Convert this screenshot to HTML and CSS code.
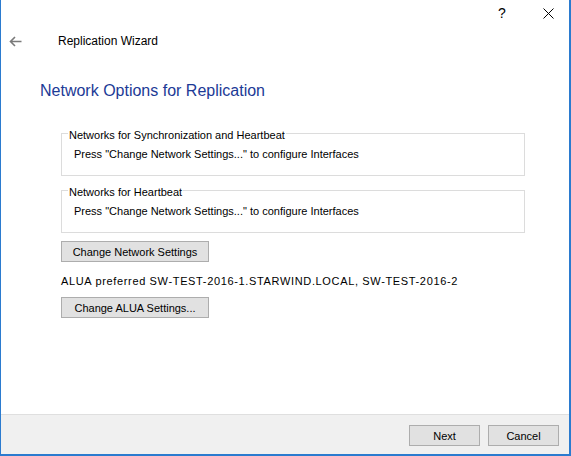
FILE: index.html
```html
<!DOCTYPE html>
<html lang="en">
<head>
<meta charset="utf-8">
<title>Replication Wizard</title>
<link rel="stylesheet" href="styles.css">
</head>
<body>
<div class="window">
  <div class="titlebar">
    <span class="tb-help">?</span>
    <span class="tb-close">
      <svg width="11" height="11" viewBox="0 0 11 11"><path d="M0.5 0.5 L10.5 10.5 M10.5 0.5 L0.5 10.5" stroke="#000" stroke-width="1" fill="none"/></svg>
    </span>
  </div>

  <div class="header">
    <span class="back">
      <svg width="13" height="11" viewBox="0 0 13 11"><path d="M12.5 5.5 H1.5 M6 1 L1.5 5.5 L6 10" stroke="#7a7a7a" stroke-width="1.6" fill="none"/></svg>
    </span>
    <span class="wizard-title">Replication Wizard</span>
  </div>

  <main class="main">
    <h1 class="instruction">Network Options for Replication</h1>

    <div class="panel">
      <fieldset class="group">
        <legend>Networks for Synchronization and Heartbeat</legend>
        <div class="group-text">Press "Change Network Settings..." to configure Interfaces</div>
      </fieldset>

      <fieldset class="group group-second">
        <legend>Networks for Heartbeat</legend>
        <div class="group-text">Press "Change Network Settings..." to configure Interfaces</div>
      </fieldset>

      <button class="btn btn-wide btn-network">Change Network Settings</button>

      <div class="alua">ALUA preferred SW-TEST-2016-1.STARWIND.LOCAL, SW-TEST-2016-2</div>

      <button class="btn btn-wide btn-alua">Change ALUA Settings...</button>
    </div>
  </main>

  <footer class="footer">
    <button class="btn btn-nav">Next</button>
    <button class="btn btn-nav">Cancel</button>
  </footer>
</div>
</body>
</html>
```

FILE: styles.css
```css
* {
  box-sizing: border-box;
}

html, body {
  margin: 0;
  padding: 0;
  background: #ffffff;
}

body {
  width: 571px;
  height: 456px;
  overflow: hidden;
  font-family: "Liberation Sans", Arial, sans-serif;
  font-size: 11px;
  color: #000;
}

.window {
  width: 571px;
  height: 456px;
  display: flex;
  flex-direction: column;
  border-left: 1px solid #2b7bcf;
  border-right: 2px solid #2b7bcf;
  border-bottom: 2px solid #2b7bcf;
  background: #fff;
}

/* caption bar with help and close glyphs */
.titlebar {
  height: 30px;
  display: flex;
  align-items: center;
  justify-content: flex-end;
  padding-right: 15px;
}

.tb-help {
  font-size: 14px;
  line-height: 14px;
  width: 10px;
  text-align: center;
  margin-right: 36px;
  margin-top: -4px;
}

.tb-close {
  display: flex;
  margin-top: -4px;
}

.header {
  height: 22px;
  display: flex;
  align-items: center;
}

.back {
  display: flex;
  margin-left: 8px;
  width: 13px;
}

.wizard-title {
  margin-left: 36px;
  font-size: 12px;
  line-height: 16px;
}

.main {
  flex: 1;
  padding-left: 39px;
}

.instruction {
  margin: 28px 0 0 0;
  font-weight: normal;
  font-size: 16px;
  line-height: 22px;
  color: #1c3a96;
}

.panel {
  padding-left: 21px;
  padding-top: 22px;
  width: 485px;
  display: flex;
  flex-direction: column;
  align-items: flex-start;
}

.group {
  margin: 0;
  width: 464px;
  border: 1px solid #dcdcdc;
  padding: 4px 12px 13px 12px;
}

.group legend {
  padding: 4px 1px 0 1px;
  margin-left: -6px;
  line-height: 14px;
}

.group-text {
  line-height: 16px;
}

.group-second {
  margin-top: 5px;
}

.btn {
  font-family: inherit;
  font-size: 11px;
  color: #000;
  background: #e1e1e1;
  border: 1px solid #adadad;
  border-radius: 0;
  height: 21px;
  padding: 0;
  margin: 0;
}

.btn-wide {
  width: 148px;
}

.btn-network {
  margin-top: 8px;
}

.alua {
  margin-top: 11px;
  line-height: 16px;
  letter-spacing: 0.65px;
}

.btn-alua {
  margin-top: 8px;
}

.footer {
  height: 40px;
  border-top: 1px solid #dfdfdf;
  background: #f0f0f0;
  display: flex;
  justify-content: flex-end;
  align-items: flex-start;
  gap: 8px;
  padding: 10px 10px 0 0;
}

.btn-nav {
  width: 71px;
}
```
